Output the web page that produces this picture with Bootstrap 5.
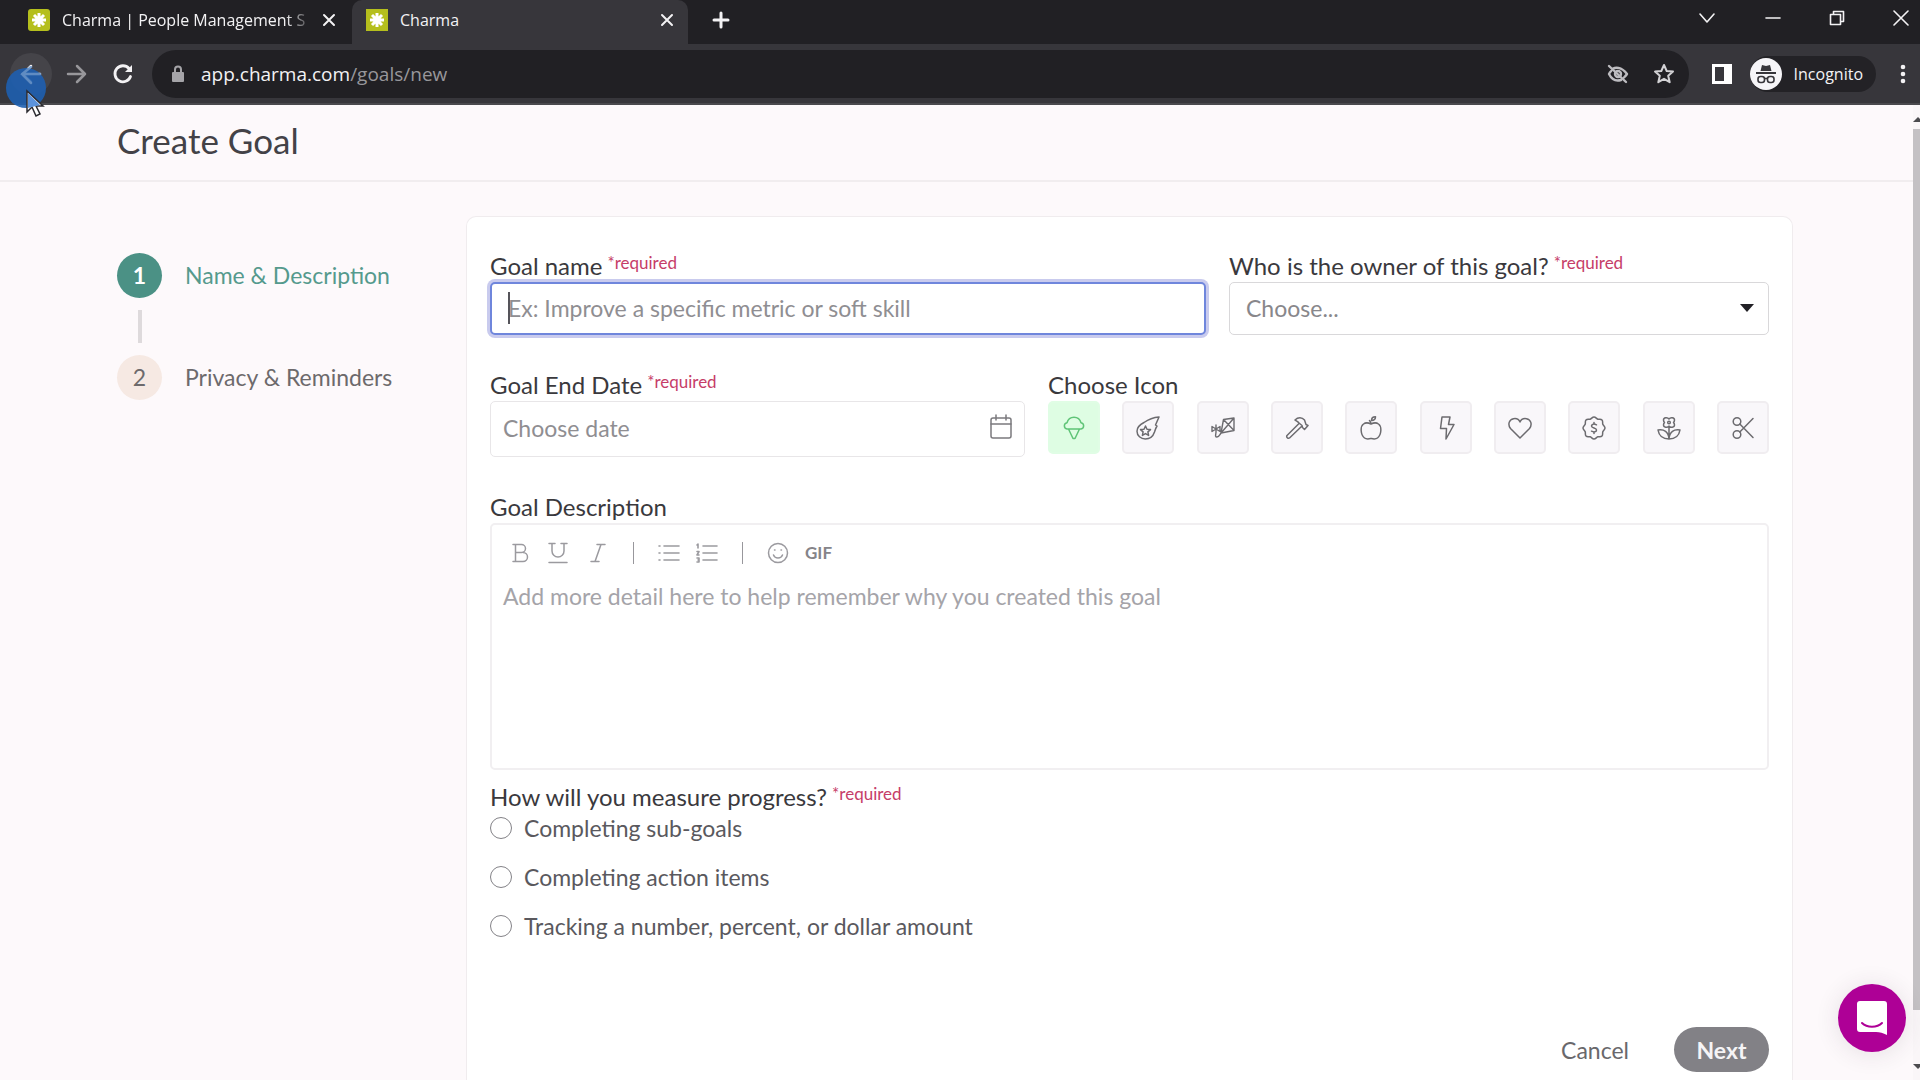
<!DOCTYPE html>
<html lang="en">
<head>
<meta charset="utf-8">
<meta name="viewport" content="width=device-width, initial-scale=1">
<title>Charma</title>
<link rel="stylesheet" href="https://cdn.jsdelivr.net/npm/bootstrap@5.3.0/dist/css/bootstrap.min.css">
<script src="https://cdn.jsdelivr.net/npm/bootstrap@5.3.0/dist/js/bootstrap.bundle.min.js"></script>
<style>
  body { font-family: Lato, "Open Sans", sans-serif; font-size: 23px; line-height: 32px; color: #3c3b40; background: #fdf9fb; }
  svg { display: block; flex: none; }
  .ln { fill: none; stroke: currentColor; stroke-linecap: round; stroke-linejoin: round; }

  /* browser frame */
  .browser { font-family: "Open Sans", "Noto Sans", sans-serif; color: #f3f2f4; background: #212024; }
  .tabstrip { height: 44px; padding-left: 8px; }
  .tab { width: 344px; height: 40px; padding: 0 16px 0 20px; font-size: 16px; line-height: 24px; }
  .tab-on { width: 336px; height: 44px; padding: 0 14px 4px; background: #37363b; border-radius: 10px 10px 0 0; }
  .tab-name { white-space: nowrap; }
  .tab-fade { -webkit-mask-image: linear-gradient(90deg, #000 92%, rgba(0, 0, 0, .3)); mask-image: linear-gradient(90deg, #000 92%, rgba(0, 0, 0, .3)); }
  .win { padding-right: 11px; }
  .plain { border: 0; background: none; padding: 0; color: inherit; }
  .toolbar { height: 61px; background: #37363b; padding: 0 14px 0 10px; border-bottom: 2px solid #4a494d; }
  .round { width: 42px; height: 42px; border-radius: 50%; display: grid; place-items: center; }
  .round-lit { background: #454449; }
  .omni { height: 48px; border-radius: 24px; background: #212024; padding: 0 14px 0 19px; margin-right: 23px; }
  .url { font-size: 19px; line-height: 28px; }
  .url span, .dim { color: #98979b; }
  .incog { height: 36px; border-radius: 18px; background: #232226; font-size: 16px; padding-right: 13px; margin-left: 18px; }
  .pointer { left: 6px; top: 66px; z-index: 5; pointer-events: none; }

  /* page */
  .page-head { height: 77px; padding: 0 0 6px 117px; border-bottom: 2px solid #f1edef; }
  .page-head h1 { font-size: 35px; line-height: 44px; font-weight: 400; color: #434247; }
  .work { padding: 34px 120px 0 117px; }
  .steps { width: 349px; padding-top: 36px; }
  .step { height: 46px; gap: 23px; color: #6d6a6c; text-decoration: none; }
  .step-on { color: #559a8d; }
  .dot { width: 45px; height: 45px; border-radius: 50%; background: #f6e9e3; }
  .step-on .dot { background: #4b9185; color: #fff; font-weight: 700; }
  .join { width: 4px; height: 33px; margin: 12px 0 11px 21px; background: #dedadc; }
  .sheet { border: 1px solid #f0ecee; border-bottom: 0; border-radius: 10px 10px 0 0; background: #fff; padding: 33px 23px 12px; }
  .lbl { font-size: 24px; line-height: 32px; color: #3a393d; }
  .req { font-size: 17px; line-height: 20px; color: #c63d68; margin-left: 5px; padding-bottom: 6px; }
  .field { border: 1px solid #d9d8da; border-radius: 5px; font-size: 23px; line-height: 32px; color: #88878b; background: #fff; }
  .field::placeholder { color: #8f8e92; opacity: 1; }
  .name-in { height: 53px; padding: 0 16px 2px; border: 2px solid #6f86dc; box-shadow: 0 0 0 3px #c9cbee; }
  .caret { left: 18px; top: 10px; width: 2px; height: 32px; background: #55545a; pointer-events: none; }
  .owner { height: 53px; padding: 0 16px 2px; appearance: none; -webkit-appearance: none; }
  .owner-mark { right: 15px; top: 22px; pointer-events: none; }
  .date-in { height: 56px; padding: 0 12px 2px; border-color: #e8e6e8; }
  .date-mark { right: 12px; top: 13px; color: #7b7a7e; }
  .gap-c { gap: 23px; }
  .col-name { flex: 716 1 0; }
  .col-owner { flex: 540 1 0; }
  .col-date { flex: 535 1 0; }
  .col-icons { flex: 721 1 0; }
  .r2 { margin-top: 34px; }
  .r3 { margin-top: 34px; }
  .pick { width: 52px; height: 53px; border: 2px solid #f0edf0; border-radius: 5px; background: #f9f7fa; color: #6c6b6f; display: grid; place-items: center; padding: 0; }
  .pick-on { background: #defde3; border-color: #e0fde5; color: #5fc477; }
  .editor { border: 2px solid #f1eff1; border-radius: 5px; }
  .tools { height: 55px; padding: 0 17px; color: #9b9a9f; }
  .tools .bar { width: 1px; height: 22px; background: #98979c; }
  .gif { font-size: 17px; line-height: 24px; font-weight: 700; color: #858489; }
  .desc { height: 188px; border: 0; padding: 0 11px; color: #3c3b40; font-size: 23px; line-height: 32px; resize: none; background: none; outline: 0; }
  .desc::placeholder { color: #a5a4a9; opacity: 1; }
  .ways { gap: 17px; }
  .way { gap: 12px; color: #5a595e; }
  .way input { appearance: none; -webkit-appearance: none; width: 22px; height: 22px; margin: 0; border: 1px solid #838287; border-radius: 50%; background: #fff; }
  .measure { margin-top: 11px; }
  .measure .lbl { line-height: 31px; }
  .foot { margin-top: 85px; gap: 45px; }
  .cancel { color: #69686c; text-decoration: none; }
  .next { height: 45px; width: 95px; border: 0; border-radius: 23px; background: #828186; color: #f5f4f6; font-weight: 700; }
  .chat { right: 14px; bottom: 28px; width: 68px; height: 68px; border: 0; border-radius: 50%; background: #ae0096; display: grid; place-items: center; padding: 0; box-shadow: 0 2px 24px rgba(60, 40, 55, .12); }
  .rail { width: 7px; background: #faf6f8; color: #4c4b4f; }
  .thumb { background: #c4c1c4; }
  .rail-top { height: 24px; padding-top: 12px; }
  .rail-end { height: 70px; padding-top: 54px; }
</style>
</head>
<body class="vh-100 overflow-hidden d-flex flex-column position-relative">

<header class="browser flex-shrink-0">
  <div class="tabstrip d-flex">
    <div class="tab d-flex align-items-center gap-2">
      <svg class="me-1" width="22" height="22" viewBox="0 0 22 22"><rect width="22" height="22" rx="3" fill="#b5bf1d"/><path d="M11 4v14M4 11h14M6 6l10 10M16 6L6 16" stroke="#fff" stroke-width="3"/></svg>
      <span class="tab-name tab-fade">Charma | People Management S</span>
      <button class="plain ms-auto" aria-label="Close tab"><svg class="ln" width="14" height="14" viewBox="0 0 14 14" stroke-width="2"><path d="M2 2l10 10M12 2L2 12"/></svg></button>
    </div>
    <div class="tab tab-on d-flex align-items-center gap-2">
      <svg class="me-1" width="22" height="22" viewBox="0 0 22 22"><rect width="22" height="22" fill="#b5bf1d"/><path d="M11 4v14M4 11h14M6 6l10 10M16 6L6 16" stroke="#fff" stroke-width="3"/></svg>
      <span class="tab-name flex-grow-1">Charma</span>
      <button class="plain" aria-label="Close tab"><svg class="ln" width="14" height="14" viewBox="0 0 14 14" stroke-width="2"><path d="M2 2l10 10M12 2L2 12"/></svg></button>
    </div>
    <button class="plain ms-4 mb-1" aria-label="New tab"><svg class="ln" width="18" height="18" viewBox="0 0 18 18" stroke-width="3"><path d="M9 2v14M2 9h14"/></svg></button>
    <div class="win ms-auto d-flex align-items-center mb-2">
      <button class="plain me-5" aria-label="Search tabs"><svg class="ln" width="18" height="12" viewBox="0 0 18 12" stroke-width="1.600"><path d="M1 2l7 8 7-8"/></svg></button>
      <button class="plain me-5" aria-label="Minimise"><svg class="ln" width="16" height="16" viewBox="0 0 16 16" stroke-width="1.600"><path d="M1 8h14"/></svg></button>
      <button class="plain me-5" aria-label="Restore"><svg class="ln" width="16" height="16" viewBox="0 0 16 16" stroke-width="1.600"><path d="M1.500 4.500h10v10h-10zM4.500 4V1.500h10v10H12"/></svg></button>
      <button class="plain" aria-label="Close"><svg class="ln" width="16" height="16" viewBox="0 0 16 16" stroke-width="1.600"><path d="M1 1l14 14M15 1L1 15"/></svg></button>
    </div>
  </div>
  <div class="toolbar d-flex align-items-center">
    <button class="plain round round-lit" aria-label="Back"><svg class="ln" width="22" height="22" viewBox="0 0 22 22" stroke-width="2.500"><path d="M20 11H3M11 3l-8 8 8 8"/></svg></button>
    <button class="plain round dim ms-1" aria-label="Forward"><svg class="ln" width="22" height="22" viewBox="0 0 22 22" stroke-width="2.500"><path d="M2 11h17M11 3l8 8-8 8"/></svg></button>
    <button class="plain round ms-1 me-2" aria-label="Reload"><svg class="ln" width="22" height="22" viewBox="0 0 22 22" stroke-width="2.800"><path d="M18.500 13.500A8 8 0 1 1 17 5.500"/><path d="M20 2v7h-7z" fill="currentColor" stroke="none"/></svg></button>
    <div class="omni flex-grow-1 d-flex align-items-center">
      <svg width="14" height="18" viewBox="0 0 14 18"><rect x="1" y="7" width="12" height="10" rx="1" fill="#a5a4a8"/><path d="M4 8V4.500a3 3 0 0 1 6 0V8" fill="none" stroke="#a5a4a8" stroke-width="2"/></svg>
      <div class="url ms-3 flex-grow-1">app.charma.com<span>/goals/new</span></div>
      <svg class="ln me-4" width="22" height="20" viewBox="0 0 22 20" stroke-width="2.400" color="#bdbcc0"><path d="M6 4.500C8 3.500 14 2 20 10c-1 1.500-2 2.500-3 3.500M14 16C9 17.500 4.500 15 2 10c.6-1.200 1.400-2.200 2.200-3M2 2l17 16"/><circle cx="11" cy="10" r="3"/></svg>
      <svg class="ln" width="22" height="22" viewBox="0 0 22 22" stroke-width="2" color="#d3d2d5"><path d="M11 2l2.700 6 6.300.6-4.800 4.200 1.500 6.400L11 15.800l-5.700 3.400 1.500-6.400L2 8.600 8.300 8z"/></svg>
    </div>
    <svg width="20" height="20" viewBox="0 0 20 20"><path d="M0 0h20v20H0zM3 3v14h9V3z" fill="#fff" fill-rule="evenodd"/></svg>
    <div class="incog d-flex align-items-center">
      <svg width="32" height="32" viewBox="0 0 32 32"><circle cx="16" cy="16" r="16" fill="#f6f5f8"/><path d="M12 7l4 1 4-1 1.500 6h-11z" fill="#37363b"/><path d="M6 15h20" stroke="#37363b" stroke-width="2"/><g fill="none" stroke="#37363b" stroke-width="1.600"><rect x="8" y="18.500" width="6.500" height="6" rx="2.500"/><rect x="17.500" y="18.500" width="6.500" height="6" rx="2.500"/><path d="M14.500 20.500h3"/></g></svg>
      <span class="ms-2 ps-1">Incognito</span>
    </div>
    <button class="plain ms-4" aria-label="Menu"><svg width="6" height="20" viewBox="0 0 6 20" fill="currentColor"><circle cx="3" cy="3" r="2.300"/><circle cx="3" cy="10" r="2.300"/><circle cx="3" cy="17" r="2.300"/></svg></button>
  </div>
</header>

<div class="d-flex flex-grow-1 overflow-hidden">
  <main class="flex-grow-1 d-flex flex-column">
    <div class="page-head d-flex align-items-center flex-shrink-0"><h1 class="m-0">Create Goal</h1></div>
    <div class="work d-flex flex-grow-1">
      <nav class="steps flex-shrink-0" aria-label="Steps">
        <a class="step step-on d-flex align-items-center" href="#name"><span class="dot d-flex align-items-center justify-content-center">1</span>Name &amp; Description</a>
        <div class="join"></div>
        <a class="step d-flex align-items-center" href="#privacy"><span class="dot d-flex align-items-center justify-content-center">2</span>Privacy &amp; Reminders</a>
      </nav>

      <form class="sheet flex-grow-1">
        <div class="d-flex gap-c">
          <div class="col-name">
            <label class="lbl d-flex align-items-center" for="goal">Goal name <span class="req">*required</span></label>
            <div class="position-relative">
              <input id="goal" class="field name-in w-100 d-block" type="text" placeholder="Ex: Improve a specific metric or soft skill">
              <span class="caret position-absolute"></span>
            </div>
          </div>
          <div class="col-owner">
            <label class="lbl d-flex align-items-center" for="owner">Who is the owner of this goal? <span class="req">*required</span></label>
            <div class="position-relative">
              <select id="owner" class="field owner w-100 d-block"><option>Choose...</option></select>
              <svg class="owner-mark position-absolute" width="14" height="8" viewBox="0 0 14 8"><path d="M0 0h14L7 8z" fill="#222126"/></svg>
            </div>
          </div>
        </div>

        <div class="r2 d-flex gap-c">
          <div class="col-date">
            <label class="lbl d-flex align-items-center" for="date">Goal End Date <span class="req">*required</span></label>
            <div class="position-relative">
              <input id="date" class="field date-in w-100 d-block" type="text" placeholder="Choose date">
              <svg class="ln date-mark position-absolute" width="24" height="26" viewBox="0 0 24 26" stroke-width="1.500"><rect x="2" y="4" width="20" height="20" rx="2"/><path d="M2 10h20M7 1v5M17 1v5"/></svg>
            </div>
          </div>
          <div class="col-icons">
            <div class="lbl" id="pick">Choose Icon</div>
            <div class="d-flex justify-content-between" role="group" aria-labelledby="pick">
              <button type="button" class="pick pick-on" aria-label="Ice cream"><svg class="ln" width="24" height="24" viewBox="0 0 24 24" stroke-width="1.500"><path d="M5 13a3.200 3.200 0 0 1 0-6.300C6 3 9 1.200 12 1.200S18 3 19 6.700A3.200 3.200 0 0 1 19 13zM6.500 13l4.500 9.500h2L17.500 13"/></svg></button>
              <button type="button" class="pick" aria-label="Comet"><svg class="ln" width="24" height="24" viewBox="0 0 24 24" stroke-width="1.500"><path d="M23 1c-6 .5-10 2-15 5.500C3 9 1 12 1 15.200 1 19.600 4.800 23 9.300 23c5 0 7.700-2.500 9.200-7 .7-2.500 1-3.500 2.500-6l-1.500-1z"/><path d="M9.500 10l1.500 3.200 3.500.4-2.600 2.300.7 3.500-3.100-1.800-3.100 1.800.7-3.500-2.600-2.300 3.500-.4z"/></svg></button>
              <button type="button" class="pick" aria-label="Kite"><svg class="ln" width="24" height="24" viewBox="0 0 24 24" stroke-width="1.400"><path d="M12.500 3.500L23 2v12.500L10 17zM12.500 3.500L23 14.500M23 2L10 17c-1.500 2-2 4-4 4-2.500 0-1-3-1-5M5 16V9M1 10.500l4 2.500-4 2.500zM9 10.500L5 13l4 2.500z"/></svg></button>
              <button type="button" class="pick" aria-label="Hammer"><svg class="ln" width="24" height="24" viewBox="0 0 24 24" stroke-width="1.500"><path d="M10 4c3-3 7-3 9.500 0L21 8.500l2 1-3.500 4-2-2-.5-2-3-2.500c-1.500-2-3-2-4-3zM14 7.500L2 19.500c-1 1.500 1 3.500 2.500 2.500L17 10"/></svg></button>
              <button type="button" class="pick" aria-label="Apple"><svg class="ln" width="24" height="24" viewBox="0 0 24 24" stroke-width="1.500"><path d="M12 8C9 6.500 6.500 6.500 4.500 8 1 10.500 1.500 19 5.500 22c2 1.500 4 1 6.500.5 2.500.5 4.500 1 6.500-.5 4-3 4.500-11.500 1-14-2-1.500-4.500-1.500-7.500 0zM12 8c0-1.500-.5-2.500-1.500-3.500M12.500 4.500c0-2.500 1.500-3.700 4-3.700 0 2.500-1.500 3.700-4 3.700z"/></svg></button>
              <button type="button" class="pick" aria-label="Lightning"><svg class="ln" width="24" height="24" viewBox="0 0 24 24" stroke-width="1.500"><path d="M8 1h8l-1.500 7.500H20L12 23l.5-10.500h-6z"/></svg></button>
              <button type="button" class="pick" aria-label="Heart"><svg class="ln" width="24" height="24" viewBox="0 0 24 24" stroke-width="1.500"><path d="M12 22L2.500 12.500C-.5 8.500 1 3.500 5.500 2.700 8.500 2.200 11 3.500 12 6c1-2.500 3.500-3.800 6.500-3.300 4.500.8 6 5.800 3 9.800z"/></svg></button>
              <button type="button" class="pick" aria-label="Dollar badge"><svg class="ln" width="24" height="24" viewBox="0 0 24 24" stroke-width="1.500"><path d="M12 1c1.800 0 2.300 1.700 3.800 2.200s3-.4 4.200.8.300 2.700.8 4.200S23 10.200 23 12s-1.700 2.300-2.200 3.800.4 3-.8 4.200-2.700.3-4.200.8S13.800 23 12 23s-2.300-1.700-3.800-2.200-3 .4-4.200-.8-.3-2.700-.8-4.200S1 13.800 1 12s1.700-2.300 2.200-3.800-.4-3 .8-4.200 2.700-.3 4.200-.8S10.200 1 12 1zM14.500 8.800C12 7.500 9.500 8 9.500 10c0 2.500 5 1.500 5 4 0 2-2.500 2.500-5 1.200M12 6.500V8M12 16v1.500"/></svg></button>
              <button type="button" class="pick" aria-label="Flower"><svg class="ln" width="24" height="24" viewBox="0 0 24 24" stroke-width="1.500"><path d="M12 3c1.500-2 5.500-1.500 5.500 1 0 1-.5 2-1 2.500.5.500 1 1.500 1 2.500 0 2.500-4 3-5.500 1.200C10.500 12 6.500 11.500 6.500 9c0-1 .5-2 1-2.500-.5-.500-1-1.500-1-2.500 0-2.500 4-3 5.500-1zM12 10v11M1 14c6-1 10.500 1.500 11 9-6 0-10-3-11-9zM23 14c-6-1-10.500 1.500-11 9 6 0 10-3 11-9z"/><circle cx="12" cy="6.500" r="1.300"/></svg></button>
              <button type="button" class="pick" aria-label="Scissors"><svg class="ln" width="24" height="24" viewBox="0 0 24 24" stroke-width="1.500"><circle cx="6" cy="5.500" r="3.800"/><circle cx="6" cy="18.500" r="3.800"/><path d="M8.800 8L22 21.500M8.800 16L22 2.500"/></svg></button>
            </div>
          </div>
        </div>

        <div class="r3">
          <label class="lbl d-block" for="desc">Goal Description</label>
          <div class="editor">
            <div class="tools d-flex align-items-center">
              <button type="button" class="plain" aria-label="Bold"><svg class="ln" width="22" height="22" viewBox="0 0 22 22" stroke-width="1.500"><path d="M4 2.500h8.500a4 4 0 0 1 0 8H6.500M4 19.500h10a4.300 4.300 0 0 0 0-9M6.500 2.500v17"/></svg></button>
              <button type="button" class="plain ms-3" aria-label="Underline"><svg class="ln" width="22" height="22" viewBox="0 0 22 22" stroke-width="1.500"><path d="M2 1.500h6M14 1.500h6M5 1.500V9a6 6 0 0 0 12 0V1.500M2 20.500h18"/></svg></button>
              <button type="button" class="plain ms-3" aria-label="Italic"><svg class="ln" width="24" height="22" viewBox="0 0 24 22" stroke-width="1.500"><path d="M12 2.500h8M6 19.500h8M16 2.500l-6 17"/></svg></button>
              <span class="bar mx-4"></span>
              <button type="button" class="plain" aria-label="Bulleted list"><svg class="ln" width="22" height="20" viewBox="0 0 22 20" stroke-width="1.600"><path d="M6 3h15M6 10h15M6 17h15M1 3h1M1 10h1M1 17h1"/></svg></button>
              <button type="button" class="plain ms-3" aria-label="Numbered list"><svg class="ln" width="22" height="20" viewBox="0 0 22 20" stroke-width="1.600"><path d="M7 3h14M7 10h14M7 17h14M1 2l1-1v4M1 8.500h2L1 12h2M1 15h2v4H1M2 17h1"/></svg></button>
              <span class="bar mx-4"></span>
              <button type="button" class="plain" aria-label="Emoji"><svg class="ln" width="22" height="22" viewBox="0 0 22 22" stroke-width="1.500"><circle cx="11" cy="11" r="9.500"/><path d="M6.500 13c1.500 4 7.500 4 9 0M7.500 8h.5M14 8h.5"/></svg></button>
              <button type="button" class="plain gif ms-3">GIF</button>
            </div>
            <textarea id="desc" class="desc w-100 d-block" placeholder="Add more detail here to help remember why you created this goal"></textarea>
          </div>
        </div>

        <fieldset class="measure">
          <legend class="lbl d-flex align-items-center m-0">How will you measure progress? <span class="req">*required</span></legend>
          <div class="ways d-flex flex-column">
            <label class="way d-flex align-items-center"><input type="radio" name="way">Completing sub-goals</label>
            <label class="way d-flex align-items-center"><input type="radio" name="way">Completing action items</label>
            <label class="way d-flex align-items-center"><input type="radio" name="way">Tracking a number, percent, or dollar amount</label>
          </div>
        </fieldset>

        <div class="foot d-flex align-items-center justify-content-end">
          <a class="cancel" href="#cancel">Cancel</a>
          <button type="button" class="next">Next</button>
        </div>
      </form>
    </div>
  </main>
  <div class="rail d-flex flex-column flex-shrink-0 overflow-hidden">
    <div class="rail-top flex-shrink-0"><svg width="10" height="5" viewBox="0 0 10 5"><path d="M0 5l5-5 5 5z" fill="currentColor"/></svg></div>
    <div class="thumb flex-grow-1"></div>
    <div class="rail-end flex-shrink-0"><svg width="10" height="5" viewBox="0 0 10 5"><path d="M0 0l5 5 5-5z" fill="currentColor"/></svg></div>
  </div>
</div>

<button class="chat position-absolute" aria-label="Open chat"><svg width="32" height="36" viewBox="0 0 32 36"><path d="M4 1h24a3 3 0 0 1 3 3v31c-4-2-7-3-11-3H4a3 3 0 0 1-3-3V4a3 3 0 0 1 3-3z" fill="#fff"/><path d="M6 23c5 5 15 5 20 0" fill="none" stroke="#ae0096" stroke-width="2" stroke-linecap="round"/></svg></button>

<svg class="pointer position-absolute" width="42" height="52" viewBox="0 0 42 52"><circle cx="20" cy="22" r="20" fill="#1e5fb0" opacity=".9"/><path d="M16 8h18M25 1l-9 7 9 9" stroke="#6c93c4" stroke-width="2.500" fill="none" stroke-linecap="round" opacity=".8"/><path d="M21 25v21l5-5 4 9 4-2-4-8h7z" fill="#fff" stroke="#2c2b30" stroke-width="1.500"/><path d="M22 27v15l12-3z" fill="#5c93dc"/></svg>
</body>
</html>
